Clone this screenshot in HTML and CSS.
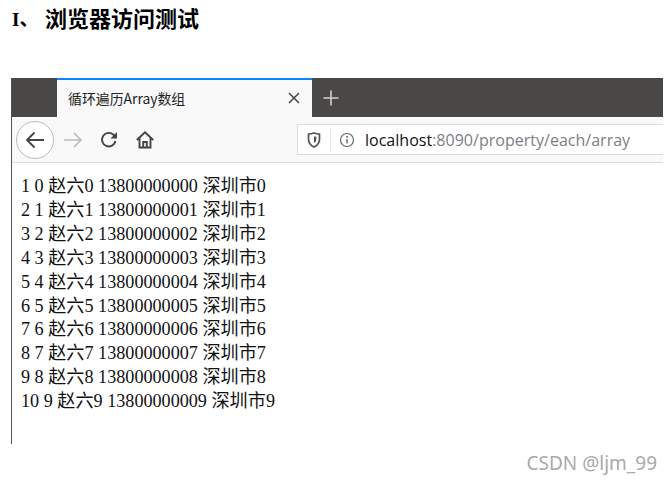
FILE: index.html
```html
<!DOCTYPE html>
<html lang="zh">
<head>
<meta charset="utf-8">
<title>浏览器访问测试</title>
<link rel="stylesheet" href="styles.css">
</head>
<body>
<h1 class="heading"><span class="num">I、</span><span>浏览器访问测试</span></h1>
<div class="browser">
  <div class="tabstrip">
    <div class="tab">
      <span class="tab-title">循环遍历Array数组</span>
      <svg class="tab-close" width="14" height="14" viewBox="0 0 14 14"><path d="M2 2l10 10M12 2L2 12" stroke="#444" stroke-width="1.5" fill="none"/></svg>
    </div>
    <svg class="newtab" width="18" height="18" viewBox="0 0 18 18"><path d="M9 1.500v15M1.500 9h15" stroke="#d0d0cf" stroke-width="1.600" fill="none"/></svg>
  </div>
  <div class="toolbar">
    <div class="back">
      <svg width="22" height="22" viewBox="0 0 22 22"><path d="M20 11H3M10.500 3.500L3 11l7.500 7.500" stroke="#444" stroke-width="1.800" fill="none"/></svg>
    </div>
    <svg class="tool fwd" width="20" height="20" viewBox="0 0 20 20"><path d="M1 10h17M11 3l7 7-7 7" stroke="#bbb" stroke-width="1.600" fill="none"/></svg>
    <svg class="tool reload" width="20" height="20" viewBox="0 0 20 20"><path d="M16.500 11a6.800 6.800 0 1 1-2-6.300L17 7" stroke="#444" stroke-width="1.900" fill="none"/><path d="M18 2v6.500h-6.500z" fill="#444"/></svg>
    <svg class="tool home" width="20" height="20" viewBox="0 0 20 20"><path d="M1.800 10L10 2.200 18.200 10M4.500 8v9.500h11V8M8.200 17.500v-5.500h3.600v5.500" stroke="#444" stroke-width="1.900" fill="none"/></svg>
    <div class="urlbar">
      <svg class="shield" width="14" height="16" viewBox="0 0 14 16"><path d="M1.500 2.200C4 2 5.500 1.500 7 1c1.500.5 3 1 5.500 1.200v5C12.500 11 10 13.500 7 15 4 13.500 1.500 11 1.500 7.200z" fill="none" stroke="#555" stroke-width="1.700"/><path d="M7 4.500h2.300v3.500C9.300 9.500 8 10.500 7 11z" fill="#555"/></svg>
      <span class="sep"></span>
      <svg class="info" width="16" height="16" viewBox="0 0 16 16"><circle cx="8" cy="8" r="6.500" fill="none" stroke="#666" stroke-width="1.200"/><path d="M8 7v4.500" stroke="#666" stroke-width="1.400"/><circle cx="8" cy="4.800" r="1" fill="#666"/></svg>
      <span class="url"><span class="host">localhost</span>:8090/property/each/array</span>
    </div>
  </div>
  <div class="content">
    <div>1 0 赵六0 13800000000 深圳市0</div>
    <div>2 1 赵六1 13800000001 深圳市1</div>
    <div>3 2 赵六2 13800000002 深圳市2</div>
    <div>4 3 赵六3 13800000003 深圳市3</div>
    <div>5 4 赵六4 13800000004 深圳市4</div>
    <div>6 5 赵六5 13800000005 深圳市5</div>
    <div>7 6 赵六6 13800000006 深圳市6</div>
    <div>8 7 赵六7 13800000007 深圳市7</div>
    <div>9 8 赵六8 13800000008 深圳市8</div>
    <div>10 9 赵六9 13800000009 深圳市9</div>
  </div>
</div>
<div class="watermark">CSDN @ljm_99</div>
</body>
</html>
```
FILE: styles.css
```css
* { box-sizing: border-box; }
html, body { margin: 0; padding: 0; }
body {
  width: 672px;
  height: 485px;
  overflow: hidden;
  background: #fff;
  padding: 8px 9px 0 11px;
  font-family: "Liberation Serif", "Noto Sans CJK SC", serif;
}
.heading {
  margin: 0 0 0 1px;
  height: 70px;
  display: flex;
  align-items: flex-start;
  font-size: 22px;
  line-height: 24px;
  font-weight: bold;
  color: #000;
  font-family: "Liberation Serif", "Noto Sans CJK SC", serif;
}
.num { width: 33px; flex: none; font-size: 19px; white-space: nowrap; }
.browser {
  height: 366px;
  border-left: 1px solid #555;
  display: flex;
  flex-direction: column;
}
.tabstrip {
  height: 39px;
  background: #4a4846;
  display: flex;
  align-items: center;
  padding-left: 45px;
  flex: none;
}
.tab {
  width: 255px;
  height: 39px;
  background: #f9f9fa;
  border-top: 2px solid #0a84ff;
  display: flex;
  align-items: center;
  justify-content: space-between;
  padding: 0 11px 2px 11px;
}
.tab-title {
  font: 13.9px/18px "Noto Sans CJK SC", "Noto Sans", sans-serif;
  color: #222;
}
.newtab { margin-left: 10px; }
.toolbar {
  height: 46px;
  background: #f9f9fa;
  border-bottom: 1px solid #ddd;
  display: flex;
  align-items: center;
  padding-left: 4px;
  flex: none;
}
.back {
  width: 38px;
  height: 38px;
  border-radius: 50%;
  border: 1px solid #bdbdbd;
  background: #fff;
  display: flex;
  align-items: center;
  justify-content: center;
  flex: none;
}
.tool { flex: none; }
.fwd { margin-left: 9px; }
.reload { margin-left: 16px; }
.home { margin-left: 16px; }
.urlbar {
  margin-left: 142px;
  flex: 1;
  height: 31px;
  background: #fff;
  border: 1px solid #dcdcdc;
  border-right: none;
  display: flex;
  align-items: center;
  padding-left: 9px;
}
.sep { width: 1px; height: 24px; background: #e6e6e6; margin-left: 9px; }
.info { margin-left: 8px; }
.url {
  margin-left: 10px;
  font: 16.05px/20px "Open Sans", "Noto Sans", sans-serif;
  color: #7d7d85;
  white-space: nowrap;
}
.host { color: #111; }
.content {
  flex: 1;
  background: #fff;
  padding: 12px 0 0 9px;
  font-size: 18.15px;
  line-height: 23.9px;
  color: #111;
  font-family: "Liberation Serif", "Noto Sans CJK SC", serif;
}
.watermark {
  text-align: right;
  margin-top: 7px;
  padding-right: 6px;
  font: 19px/24px "Noto Sans", "Open Sans", sans-serif;
  color: #a9a9a9;
}
```
